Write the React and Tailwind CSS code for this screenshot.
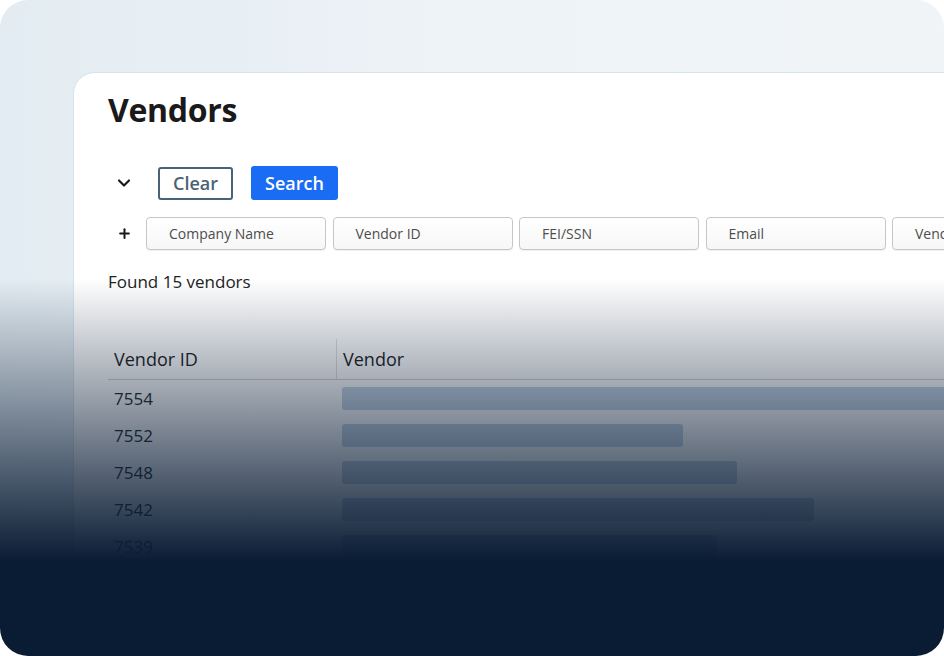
import { ChevronDown, Plus } from 'lucide-react';

const filters = ['Company Name', 'Vendor ID', 'FEI/SSN', 'Email', 'Vendor Name'];

const vendors = [
  { id: '7554', width: 640 },
  { id: '7552', width: 341 },
  { id: '7548', width: 395 },
  { id: '7542', width: 472 },
  { id: '7539', width: 375 },
];

export default function App() {
  return (
    <div className="h-[656px] w-[944px] bg-white font-['Open_Sans','Noto_Sans',sans-serif]">
      <div className="relative h-full w-full overflow-hidden rounded-[28px] bg-gradient-to-r from-[#e3ecf2] via-[#eef3f7] to-[#f0f4f7] pl-[73px] pt-[72px]">
        <div className="h-full w-[900px] rounded-tl-[22px] border border-[#d5e3ec] bg-white pl-[34px] pt-[15px]">
          <h1 className="text-[32px] font-bold leading-[44px] tracking-[-0.3px] text-[#1a1a1a]">Vendors</h1>

          <div className="mt-[34px] flex h-[34px] items-center">
            <div className="flex w-[32px] shrink-0 justify-center">
              <ChevronDown size={20} strokeWidth={2.6} className="text-[#1a1a1a]" />
            </div>
            <button className="ml-[18px] h-[33px] w-[75px] shrink-0 rounded-[3px] border-2 border-[#4a6276] text-[18px] font-semibold text-[#4a6276]">
              Clear
            </button>
            <button className="ml-[18px] h-[34px] w-[87px] shrink-0 rounded-[3px] bg-[#1a6cf4] text-[18px] font-semibold text-white">
              Search
            </button>
          </div>

          <div className="mt-[17px] flex h-[33px] items-center">
            <div className="flex w-[32px] shrink-0 justify-center">
              <Plus size={15} strokeWidth={3.2} className="text-[#1a1a1a]" />
            </div>
            <div className="ml-[6px] flex shrink-0 gap-[6.5px]">
              {filters.map((f) => (
                <div
                  key={f}
                  className="flex h-[33px] w-[180px] shrink-0 items-center whitespace-nowrap rounded-[4px] border border-[#c6c6c6] bg-gradient-to-b from-white to-[#f7f7f7] pl-[22px] text-[14px] text-[#4d4d4d] shadow-[0_1px_1px_rgba(0,0,0,0.06)]"
                >
                  {f}
                </div>
              ))}
            </div>
          </div>

          <p className="mt-[19px] text-[17px] leading-[26px] text-[#222]">Found 15 vendors</p>

          <div className="mt-[44px]">
            <div className="flex h-[41px] border-b border-[#d4d4d4]">
              <div className="flex w-[228px] shrink-0 items-center pl-[6px] text-[18px] text-[#1e1e1e]">Vendor ID</div>
              <div className="flex items-center border-l border-[#dedede] pl-[6px] text-[18px] text-[#1e1e1e]">Vendor</div>
            </div>
            {vendors.map((v) => (
              <div key={v.id} className="flex h-[37px] items-center">
                <div className="w-[228px] shrink-0 pl-[6px] text-[17px] text-[#2a2a2a]">{v.id}</div>
                <div className="shrink-0 pl-[6px]">
                  <div className="h-[23px] rounded-[3px] bg-[#c6d4e4]" style={{ width: v.width }} />
                </div>
              </div>
            ))}
          </div>
        </div>

        <div className="pointer-events-none absolute inset-0 bg-[linear-gradient(to_bottom,rgba(10,28,52,0)_42.5%,#0a1c34_85.5%)]" />
      </div>
    </div>
  );
}
